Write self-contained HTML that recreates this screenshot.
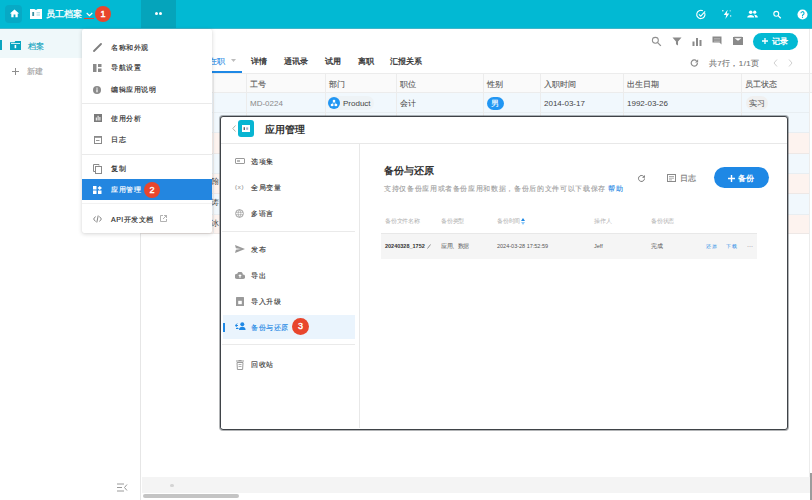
<!DOCTYPE html>
<html><head><meta charset="utf-8">
<style>
*{box-sizing:border-box;margin:0;padding:0}
html,body{width:812px;height:500px;overflow:hidden;background:#fff;font-family:"Liberation Sans",sans-serif;color:#333;-webkit-text-stroke-width:.12px}
.a{position:absolute}
.t{position:absolute;white-space:nowrap;line-height:1}
#top{left:0;top:0;width:812px;height:28px;background:#02b9d3}
#side{left:0;top:28px;width:141px;height:472px;background:#fff;border-right:1px solid #e6e6e6}
.badge{position:absolute;width:17px;height:17px;border-radius:50%;background:#e8462d;color:#fff;font-size:9px;font-weight:normal;text-align:center;line-height:17px;-webkit-text-stroke-width:.4px}
.mi{position:absolute;left:111px;font-size:7px;letter-spacing:.5px;color:#2a2a2a;-webkit-text-stroke-width:.15px;line-height:1;white-space:nowrap}
.th{position:absolute;font-size:8px;color:#5a5a5a;line-height:1;white-space:nowrap}
.td{position:absolute;font-size:8px;color:#444;line-height:1;white-space:nowrap;-webkit-text-stroke-width:0}
.ms{position:absolute;left:251px;font-size:7px;letter-spacing:.6px;color:#333;line-height:1;white-space:nowrap}
</style></head><body>
<!-- top bar -->
<div id="top" class="a">
  <div class="a" style="left:5px;top:5px;width:17px;height:18px;border-radius:4px;background:#07a9c5"></div>
  <svg class="a" style="left:9px;top:8px" width="11" height="11" viewBox="0 0 24 24"><path fill="#fff" d="M10 20v-6h4v6h5v-8h3L12 3 2 12h3v8z"/></svg>
  <svg class="a" style="left:30px;top:9px" width="12" height="10" viewBox="0 0 12 10"><path d="M0 0h4.5l.7.8h1.6L7.5 0H12v10H0z" fill="#fff"/><rect x="2.3" y="3" width="1.8" height="4" fill="#3a8fa0"/><rect x="6.5" y="3.3" width="3.5" height="1" fill="#9fd3de"/><rect x="6.5" y="5.5" width="3.5" height="1" fill="#9fd3de"/></svg>
  <div class="t" style="left:46px;top:10px;font-size:9px;color:#fff;-webkit-text-stroke-width:.3px">员工档案</div>
  <svg class="a" style="left:86px;top:12px" width="7" height="5" viewBox="0 0 7 5"><path d="M0.7 1l2.8 2.6L6.3 1" stroke="#fff" stroke-width="1.2" fill="none"/></svg>
  <div class="a" style="left:84px;top:18px;width:10px;height:1px;background:#e8462d"></div>
  <div class="badge" style="left:95px;top:6px;width:16px;height:16px;line-height:16px;font-weight:normal;-webkit-text-stroke-width:.4px">1</div>
  <div class="a" style="left:141px;top:0;width:35px;height:28px;background:#05a4bb"></div>
  <div class="a" style="left:155px;top:12px;width:3px;height:3px;border-radius:50%;background:#fff"></div>
  <div class="a" style="left:159px;top:12px;width:3px;height:3px;border-radius:50%;background:#fff"></div>
  <!-- right icons -->
  <svg class="a" style="left:695px;top:9px" width="12" height="11" viewBox="0 0 24 24"><path d="M20 8.5A9 9 0 1 1 16 4" stroke="#fff" stroke-width="2.4" fill="none"/><path d="M7.5 11.5l4 4L21 5" stroke="#fff" stroke-width="2.4" fill="none"/></svg>
  <svg class="a" style="left:721px;top:9px" width="11" height="11" viewBox="0 0 24 24"><path fill="#fff" d="M14 2L6 13h5.5l-2 9 8.5-12h-5.5l2-8z"/><circle cx="4" cy="4" r="1.6" fill="#fff"/><circle cx="21" cy="15" r="1.6" fill="#fff"/><circle cx="20" cy="4" r="1.2" fill="#fff"/></svg>
  <svg class="a" style="left:747px;top:10px" width="11" height="8" viewBox="0 0 24 18"><circle cx="8" cy="5" r="4" fill="#fff"/><circle cx="17" cy="5" r="3.6" fill="#fff"/><path d="M0 17c0-4 4-6 8-6s8 2 8 6z" fill="#fff"/><path d="M17 10.5c3.5 0 7 1.7 7 6.5h-6c0-3-1-5-3-6.3z" fill="#fff"/></svg>
  <svg class="a" style="left:772px;top:10px" width="10" height="9" viewBox="0 0 24 24"><circle cx="10" cy="10" r="6.5" stroke="#fff" stroke-width="3" fill="none"/><path d="M15 15l7 7" stroke="#fff" stroke-width="3.4"/></svg>
  <svg class="a" style="left:797px;top:9px" width="11" height="11" viewBox="0 0 24 24"><circle cx="12" cy="12" r="11" fill="#fff"/><path d="M8.6 9.2a3.4 3.4 0 1 1 4.6 3.2c-.9.4-1.2 1-1.2 2v.6" stroke="#00b5d3" stroke-width="2.4" fill="none"/><circle cx="12" cy="18" r="1.4" fill="#00b5d3"/></svg>
</div>

<!-- sidebar -->
<div id="side" class="a">
  <div class="a" style="left:0;top:1px;width:141px;height:29px;background:#eff8fa"></div>
  <div class="a" style="left:0;top:12px;width:2px;height:10px;background:#0aa5c0"></div>
  <svg class="a" style="left:10px;top:13px" width="11" height="9" viewBox="0 0 11 9"><path d="M0 1.2h4.5L5.3 0H11v9H0z" fill="#0aa5c0"/><rect x="1" y="2.5" width="9" height="5.8" fill="#0aa5c0"/><rect x="1" y="2" width="9" height="0.8" fill="#fff"/><rect x="4.6" y="4" width="1.6" height="3.2" fill="#fff"/></svg>
  <div class="t" style="left:28px;top:15px;font-size:8px;color:#0aa0bb">档案</div>
  <div class="t" style="left:27px;top:40px;font-size:8px;color:#9e9e9e">新建</div>
  <svg class="a" style="left:12px;top:40px" width="7" height="7" viewBox="0 0 7 7"><path d="M3.5 0v7M0 3.5h7" stroke="#8e8e8e" stroke-width="1"/></svg>
</div>

<!-- main -->
<div class="a" style="left:141px;top:28px;width:671px;height:472px;background:#fff"></div>
<div class="a" style="left:0;top:28px;width:812px;height:1px;background:#3fb6ca"></div>
<!-- toolbar -->
<svg class="a" style="left:651px;top:36px" width="11" height="11" viewBox="0 0 24 24"><circle cx="9.5" cy="9.5" r="6.5" stroke="#8f8f8f" stroke-width="2.2" fill="none"/><path d="M14.5 14.5l7 7" stroke="#8f8f8f" stroke-width="2.8"/></svg>
<svg class="a" style="left:672px;top:37px" width="10" height="9" viewBox="0 0 24 22"><path d="M1 1h22l-8.5 10v10l-5-3v-7z" fill="#8a8a8a"/></svg>
<svg class="a" style="left:692px;top:37px" width="10" height="9" viewBox="0 0 20 18"><rect x="1" y="9" width="4" height="9" fill="#8a8a8a"/><rect x="8" y="2" width="4" height="16" fill="#8a8a8a"/><rect x="15" y="6" width="4" height="12" fill="#8a8a8a"/></svg>
<svg class="a" style="left:712px;top:36px" width="10" height="9" viewBox="0 0 20 18"><path d="M1 1h18v16l-4-4H1z" fill="#8a8a8a"/><path d="M4 5h12M4 8h12M4 11h12" stroke="#c8c8c8" stroke-width="1"/></svg>
<svg class="a" style="left:733px;top:36px" width="10" height="9" viewBox="0 0 20 18"><path d="M0 2h20v16H0z" fill="#8a8a8a"/><path d="M3 4.5h14l-7 5z" fill="#fff"/><path d="M2 0h16" stroke="#bbb" stroke-width="1.5"/></svg>
<div class="a" style="left:753px;top:33px;width:45px;height:17px;border-radius:9px;background:#02b9d3"></div>
<svg class="a" style="left:762px;top:38px" width="6" height="6" viewBox="0 0 6 6"><path d="M3 0v6M0 3h6" stroke="#fff" stroke-width="1.3"/></svg>
<div class="t" style="left:772px;top:38px;font-size:8px;color:#fff;-webkit-text-stroke-width:.35px">记录</div>
<!-- pager -->
<svg class="a" style="left:690px;top:59px" width="9" height="8" viewBox="0 0 24 22"><path d="M20 11a8.5 8.5 0 1 1-2.5-6" stroke="#8a8a8a" stroke-width="3.2" fill="none"/><path d="M22 1v8.5h-8.5z" fill="#8a8a8a"/></svg>
<div class="t" style="left:709px;top:60px;font-size:8px;color:#757575;letter-spacing:.35px">共7行，1/1页</div>
<svg class="a" style="left:773px;top:59px" width="5" height="8" viewBox="0 0 5 8"><path d="M4 0.5L1 4l3 3.5" stroke="#d0d0d0" stroke-width="1" fill="none"/></svg>
<svg class="a" style="left:788px;top:59px" width="5" height="8" viewBox="0 0 5 8"><path d="M1 0.5L4 4 1 7.5" stroke="#d0d0d0" stroke-width="1" fill="none"/></svg>
<!-- tabs -->
<div class="t" style="left:209px;top:58px;font-size:8px;color:#1e88e5">在职</div>
<svg class="a" style="left:231px;top:59px" width="5" height="4" viewBox="0 0 5 4"><path d="M0 0h5L2.5 3z" fill="#bdbdbd"/></svg>
<div class="a" style="left:141px;top:71px;width:101px;height:2px;background:#1e88e5"></div>
<div class="t" style="left:251px;top:58px;font-size:8px;color:#333;-webkit-text-stroke-width:.3px">详情</div>
<div class="t" style="left:284px;top:58px;font-size:8px;color:#333;-webkit-text-stroke-width:.3px">通讯录</div>
<div class="t" style="left:325px;top:58px;font-size:8px;color:#333;-webkit-text-stroke-width:.3px">试用</div>
<div class="t" style="left:358px;top:58px;font-size:8px;color:#333;-webkit-text-stroke-width:.3px">离职</div>
<div class="t" style="left:390px;top:58px;font-size:8px;color:#333;-webkit-text-stroke-width:.3px">汇报关系</div>
<!-- table -->
<div class="a" style="left:141px;top:73px;width:671px;height:20px;background:#fafafa;border-top:1px solid #ececec;border-bottom:1px solid #ececec"></div>
<div class="a" style="left:141px;top:93px;width:668px;height:20px;background:#f1f8fd;border-bottom:1px solid #e8eef2"></div>
<div class="a" style="left:141px;top:113px;width:668px;height:20px;background:#f1f8fd;border-bottom:1px solid #e8eef2"></div>
<div class="a" style="left:141px;top:133px;width:668px;height:21px;background:#fdf3ef;border-bottom:1px solid #eee8e6"></div>
<div class="a" style="left:141px;top:154px;width:668px;height:20px;background:#f1f8fd;border-bottom:1px solid #e8eef2"></div>
<div class="a" style="left:141px;top:174px;width:668px;height:20px;background:#fdf3ef;border-bottom:1px solid #eee8e6"></div>
<div class="a" style="left:141px;top:194px;width:668px;height:21px;background:#f1f8fd;border-bottom:1px solid #e8eef2"></div>
<div class="a" style="left:141px;top:215px;width:668px;height:19px;background:#fdf3ef;border-bottom:1px solid #eee8e6"></div>
<div class="a" style="left:246px;top:73px;width:1px;height:161px;background:#ececec"></div>
<div class="a" style="left:325px;top:73px;width:1px;height:161px;background:#ececec"></div>
<div class="a" style="left:396px;top:73px;width:1px;height:161px;background:#ececec"></div>
<div class="a" style="left:483px;top:73px;width:1px;height:161px;background:#ececec"></div>
<div class="a" style="left:540px;top:73px;width:1px;height:161px;background:#ececec"></div>
<div class="a" style="left:623px;top:73px;width:1px;height:161px;background:#ececec"></div>
<div class="a" style="left:741px;top:73px;width:1px;height:161px;background:#ececec"></div>
<div class="a" style="left:809px;top:73px;width:1px;height:161px;background:#ececec"></div>
<div class="a" style="left:213px;top:73px;width:1px;height:161px;background:#ececec"></div>
<div class="th" style="left:250px;top:81px">工号</div>
<div class="th" style="left:329px;top:81px">部门</div>
<div class="th" style="left:400px;top:81px">职位</div>
<div class="th" style="left:487px;top:81px">性别</div>
<div class="th" style="left:544px;top:81px">入职时间</div>
<div class="th" style="left:627px;top:81px">出生日期</div>
<div class="th" style="left:745px;top:81px">员工状态</div>
<div class="td" style="left:250px;top:100px;color:#8a8a8a">MD-0224</div>
<div class="a" style="left:327px;top:96px;width:47px;height:14px;border-radius:7px;background:#eef3f6"></div>
<div class="a" style="left:328px;top:97px;width:12px;height:12px;border-radius:50%;background:#2196f3"></div>
<svg class="a" style="left:330px;top:99px" width="8" height="8" viewBox="0 0 8 8"><circle cx="4" cy="2" r="1.3" fill="#fff"/><circle cx="2" cy="6" r="1.3" fill="#fff"/><circle cx="6" cy="6" r="1.3" fill="#fff"/><path d="M4 2L2 6h4z" stroke="#fff" stroke-width=".6" fill="none"/></svg>
<div class="td" style="left:343px;top:100px">Product</div>
<div class="td" style="left:400px;top:100px">会计</div>
<div class="a" style="left:487px;top:97px;width:17px;height:13px;border-radius:7px;background:#2196f3"></div>
<div class="t" style="left:491px;top:100px;font-size:8px;color:#fff">男</div>
<div class="td" style="left:544px;top:100px">2014-03-17</div>
<div class="td" style="left:627px;top:100px">1992-03-26</div>
<div class="a" style="left:746px;top:96px;width:22px;height:14px;border-radius:7px;background:#f0f0f0"></div>
<div class="td" style="left:749px;top:100px;color:#666;-webkit-text-stroke-width:.1px">实习</div>
<div class="td" style="left:211px;top:178px">翰</div>
<div class="td" style="left:211px;top:199px">涛</div>
<div class="td" style="left:211px;top:220px">冰</div>
<!-- bottom bar -->
<div class="a" style="left:809px;top:29px;width:1px;height:448px;background:#ececec"></div>
<div class="a" style="left:810px;top:473px;width:2px;height:27px;background:#9c9c9c"></div>
<div class="a" style="left:142px;top:477px;width:668px;height:16px;background:#f4f4f4"></div>
<div class="a" style="left:143px;top:494px;width:96px;height:4px;border-radius:2px;background:#c4c4c4"></div>
<div class="a" style="left:170px;top:484px;width:4px;height:3px;border-radius:2px;background:#d4d4d4"></div>
<svg class="a" style="left:117px;top:483px" width="11" height="9" viewBox="0 0 11 9"><path d="M0 1h7M0 4.5h5M0 8h7M10 1.5L7.5 4.5 10 7.5" stroke="#9a9a9a" stroke-width="1" fill="none"/></svg>

<!-- dropdown menu -->
<div class="a" style="left:82px;top:29px;width:130px;height:204px;background:#fff;border-radius:2px;box-shadow:0 1px 4px rgba(0,0,0,.16),0 0 1px rgba(0,0,0,.1)"></div>
<svg class="a" style="left:93px;top:43px" width="9" height="9" viewBox="0 0 9 9"><path d="M1 8L8 1" stroke="#7f7f7f" stroke-width="1.8" stroke-linecap="round"/></svg>
<div class="mi" style="top:44px">名称和外观</div>
<svg class="a" style="left:93px;top:64px" width="9" height="8" viewBox="0 0 9 8"><rect x="0" y="0" width="3.5" height="8" fill="#8a8a8a"/><rect x="5" y="0" width="3.5" height="3" fill="#8a8a8a"/><rect x="5" y="4.5" width="3.5" height="3.5" fill="#8a8a8a"/></svg>
<div class="mi" style="top:64px">导航设置</div>
<svg class="a" style="left:93px;top:86px" width="8" height="8" viewBox="0 0 8 8"><circle cx="4" cy="4" r="4" fill="#8a8a8a"/><rect x="3.4" y="3.3" width="1.2" height="3" fill="#fff"/><rect x="3.4" y="1.6" width="1.2" height="1.1" fill="#fff"/></svg>
<div class="mi" style="top:86px">编辑应用说明</div>
<div class="a" style="left:82px;top:103px;width:130px;height:1px;background:#eaeaea"></div>
<svg class="a" style="left:94px;top:114px" width="8" height="8" viewBox="0 0 8 8"><rect x="0" y="0" width="8" height="8" fill="#7a7a7a"/><rect x="1.8" y="3.5" width="1" height="3" fill="#fff"/><rect x="3.6" y="1.8" width="1" height="4.7" fill="#fff"/><rect x="5.4" y="3" width="1" height="3.5" fill="#fff"/></svg>
<div class="mi" style="top:115px">使用分析</div>
<svg class="a" style="left:94px;top:136px" width="8" height="8" viewBox="0 0 8 8"><rect x="0.5" y="0.5" width="7" height="7" stroke="#8a8a8a" stroke-width="1" fill="none"/><rect x="0.5" y="0.5" width="7" height="1.3" fill="#8a8a8a"/><rect x="2" y="4" width="3.5" height=".9" fill="#8a8a8a"/></svg>
<div class="mi" style="top:136px">日志</div>
<div class="a" style="left:82px;top:154px;width:130px;height:1px;background:#eaeaea"></div>
<svg class="a" style="left:93px;top:164px" width="9" height="10" viewBox="0 0 9 10"><path d="M6 1.5V0.5H0.5v7h1.5" stroke="#8a8a8a" stroke-width="1" fill="none"/><rect x="2.5" y="2.5" width="6" height="7" stroke="#8a8a8a" stroke-width="1" fill="none"/></svg>
<div class="mi" style="top:165px">复制</div>
<div class="a" style="left:82px;top:179px;width:130px;height:21px;background:#2386e0"></div>
<svg class="a" style="left:93px;top:186px" width="9" height="8" viewBox="0 0 9 8"><rect x="0" y="0" width="3.5" height="3.5" fill="#fff"/><path d="M6.7 0L9 2 6.7 4 4.5 2z" fill="#fff"/><rect x="0" y="4.5" width="3.5" height="3.5" fill="#fff"/><rect x="5" y="4.5" width="3.5" height="3.5" fill="#fff"/></svg>
<div class="mi" style="top:186px;color:#fff">应用管理</div>
<div class="badge" style="left:144px;top:182px;width:16px;height:16px;line-height:16px">2</div>
<div class="a" style="left:82px;top:203px;width:130px;height:1px;background:#f2f2f2"></div>
<svg class="a" style="left:93px;top:215px" width="9" height="8" viewBox="0 0 9 8"><path d="M2.5 1.5L0.6 4l1.9 2.5M6.5 1.5L8.4 4 6.5 6.5M5.2 0.5L3.8 7.5" stroke="#858585" stroke-width="1" fill="none"/></svg>
<div class="mi" style="top:216px">API开发文档</div>
<svg class="a" style="left:160px;top:215px" width="7" height="7" viewBox="0 0 7 7"><path d="M3 0.5H0.5v6h6V4M4 0.5h2.5V3M6.5 0.5L3 4" stroke="#9e9e9e" stroke-width=".8" fill="none"/></svg>

<!-- modal -->
<div class="a" style="left:220px;top:116px;width:568px;height:314px;background:#fff;border:1px solid #3f4348;box-shadow:0 0 0 1px rgba(63,67,72,.4);border-radius:3px"></div>
<svg class="a" style="left:232px;top:125px" width="4" height="7" viewBox="0 0 4 7"><path d="M3.5 0.5L0.8 3.5l2.7 3" stroke="#a8b4a8" stroke-width="1" fill="none"/></svg>
<div class="a" style="left:238px;top:120px;width:16px;height:17px;border-radius:3px;background:#08b5d2"></div>
<svg class="a" style="left:242px;top:125px" width="8" height="7" viewBox="0 0 8 7"><rect x="0" y="0" width="8" height="7" fill="#fff"/><rect x="1.6" y="2.2" width="1.3" height="2.8" fill="#555"/><rect x="4.2" y="2.4" width="2" height="2.4" fill="#aac"/></svg>
<div class="t" style="left:265px;top:125px;font-size:10px;font-weight:bold;color:#333;-webkit-text-stroke-width:0">应用管理</div>
<div class="a" style="left:221px;top:143px;width:566px;height:1px;background:#e8e8e8"></div>
<div class="a" style="left:359px;top:144px;width:1px;height:284px;background:#e8e8e8"></div>
<div class="a" style="left:221px;top:144px;width:138px;height:284px;background:#fff"></div>
<svg class="a" style="left:235px;top:158px" width="10" height="6" viewBox="0 0 10 6"><rect x="0.5" y="0.5" width="9" height="5" rx=".5" stroke="#9a9a9a" stroke-width="1" fill="none"/><rect x="2" y="2.3" width="3" height="1.4" fill="#9a9a9a"/></svg>
<div class="ms" style="top:158px">选项集</div>
<div class="t" style="left:235px;top:184px;font-size:6px;color:#9a9a9a;letter-spacing:.8px">(x)</div>
<div class="ms" style="top:184px">全局变量</div>
<svg class="a" style="left:235px;top:209px" width="9" height="9" viewBox="0 0 10 10"><circle cx="5" cy="5" r="4.3" stroke="#9a9a9a" stroke-width="1" fill="none"/><path d="M1 3.6h8M1 6.4h8M5 0.8c-2 2.3-2 6.1 0 8.4M5 0.8c2 2.3 2 6.1 0 8.4" stroke="#9a9a9a" stroke-width=".7" fill="none"/></svg>
<div class="ms" style="top:210px">多语言</div>
<div class="a" style="left:222px;top:231px;width:133px;height:1px;background:#eaeaea"></div>
<svg class="a" style="left:235px;top:245px" width="10" height="8" viewBox="0 0 10 8"><path d="M0 0l10 4-10 4 .9-3.3L6 4 .9 3.3z" fill="#9a9a9a"/></svg>
<div class="ms" style="top:246px">发布</div>
<svg class="a" style="left:235px;top:272px" width="10" height="7" viewBox="0 0 24 17"><path d="M19 6A7 7 0 0 0 5.3 4.2 5.5 5.5 0 0 0 5.5 17H19a5 5 0 0 0 0-11z" fill="#9a9a9a"/><path d="M12 5.5l-4.5 4.5h3v4h3v-4h3z" fill="#fff"/></svg>
<div class="ms" style="top:272px">导出</div>
<svg class="a" style="left:236px;top:297px" width="8" height="9" viewBox="0 0 8 9"><rect x="0" y="0" width="8" height="9" rx=".5" fill="#9a9a9a"/><rect x="2.2" y="3.8" width="3.6" height="3.4" fill="#fff"/></svg>
<div class="ms" style="top:298px">导入升级</div>
<div class="a" style="left:223px;top:315px;width:132px;height:24px;background:#eaf4fd"></div>
<div class="a" style="left:223px;top:323px;width:2px;height:9px;background:#1e88e5"></div>
<svg class="a" style="left:235px;top:322px" width="11" height="8" viewBox="0 0 11 8"><circle cx="7.3" cy="2.2" r="2" fill="#1e88e5"/><path d="M4 8c0-2.3 1.5-3.3 3.3-3.3S10.6 5.7 10.6 8z" fill="#1e88e5"/><path d="M2.2 1.5L0.3 3.5 2.2 5.5M0.5 3.5h2.5" stroke="#1e88e5" stroke-width="1" fill="none"/><path d="M1 6.5h2.5" stroke="#1e88e5" stroke-width="1"/></svg>
<div class="ms" style="top:324px;color:#1e88e5">备份与还原</div>
<div class="badge" style="left:292px;top:318px">3</div>
<div class="a" style="left:222px;top:344px;width:133px;height:1px;background:#eaeaea"></div>
<svg class="a" style="left:236px;top:360px" width="8" height="10" viewBox="0 0 8 10"><path d="M0 1h8M2.5 0.5h3" stroke="#9a9a9a" stroke-width="1"/><path d="M1 2.5h6l-.4 7h-5.2z" stroke="#9a9a9a" stroke-width="1" fill="none"/><path d="M2.5 4.5h3M2.5 6.5h3" stroke="#9a9a9a" stroke-width=".8"/></svg>
<div class="ms" style="top:361px">回收站</div>
<!-- content -->
<div class="t" style="left:384px;top:166px;font-size:10px;font-weight:bold;color:#333;-webkit-text-stroke-width:0">备份与还原</div>
<div class="t" style="left:384px;top:185px;font-size:7px;color:#9e9e9e;letter-spacing:.65px">支持仅备份应用或者备份应用和数据，备份后的文件可以下载保存 <span style="color:#1e88e5">帮助</span></div>
<svg class="a" style="left:637px;top:174px" width="9" height="9" viewBox="0 0 24 24"><path d="M20 12a8 8 0 1 1-2.3-5.7" stroke="#757575" stroke-width="2.6" fill="none"/><path d="M21 2.5v7.5h-7.5z" fill="#757575"/></svg>
<svg class="a" style="left:667px;top:174px" width="9" height="8" viewBox="0 0 9 8"><rect x="0.5" y="0.5" width="8" height="7" stroke="#8a8a8a" stroke-width="1" fill="none"/><path d="M2 2.5h5M2 4.2h5M2 5.9h3" stroke="#8a8a8a" stroke-width=".7"/></svg>
<div class="t" style="left:680px;top:175px;font-size:8px;color:#757575">日志</div>
<div class="a" style="left:714px;top:167px;width:55px;height:21px;border-radius:11px;background:#1e88e5"></div>
<svg class="a" style="left:728px;top:175px" width="7" height="7" viewBox="0 0 7 7"><path d="M3.5 0v7M0 3.5h7" stroke="#fff" stroke-width="1.4"/></svg>
<div class="t" style="left:738px;top:175px;font-size:8px;color:#fff;font-weight:bold;-webkit-text-stroke-width:0">备份</div>
<div class="t" style="left:385px;top:219px;font-size:5.5px;color:#b0b0b0;letter-spacing:-.2px;-webkit-text-stroke-width:0">备份文件名称</div>
<div class="t" style="left:441px;top:219px;font-size:5.5px;color:#b0b0b0;letter-spacing:-.2px;-webkit-text-stroke-width:0">备份类型</div>
<div class="t" style="left:497px;top:219px;font-size:5.5px;color:#b0b0b0;letter-spacing:-.2px;-webkit-text-stroke-width:0">备份时间</div>
<svg class="a" style="left:521px;top:218px" width="4" height="7" viewBox="0 0 4 7"><path d="M0 3h4L2 0z" fill="#1e88e5"/><path d="M0 4h4L2 7z" fill="#90caf9"/></svg>
<div class="t" style="left:594px;top:219px;font-size:5.5px;color:#b0b0b0;letter-spacing:-.2px;-webkit-text-stroke-width:0">操作人</div>
<div class="t" style="left:651px;top:219px;font-size:5.5px;color:#b0b0b0;letter-spacing:-.2px;-webkit-text-stroke-width:0">备份状态</div>
<div class="a" style="left:381px;top:233px;width:376px;height:26px;background:#f5f5f5;border-top:1px solid #e8e8e8"></div>
<div class="t" style="left:385px;top:244px;font-size:5.5px;color:#333;font-weight:bold;-webkit-text-stroke-width:0">20240328_1752</div>
<svg class="a" style="left:427px;top:244px" width="4" height="5" viewBox="0 0 4 5"><path d="M0.5 4.5L3.5 0.5" stroke="#757575" stroke-width=".8"/></svg>
<div class="t" style="left:441px;top:243px;font-size:6px;color:#555;letter-spacing:-.5px;-webkit-text-stroke-width:0">应用、数据</div>
<div class="t" style="left:497px;top:244px;font-size:5.5px;color:#555;-webkit-text-stroke-width:0">2024-03-28 17:52:59</div>
<div class="t" style="left:594px;top:244px;font-size:5.5px;color:#555;-webkit-text-stroke-width:0">Jeff</div>
<div class="t" style="left:651px;top:243px;font-size:6px;color:#555;letter-spacing:-.5px;-webkit-text-stroke-width:0">完成</div>
<div class="t" style="left:706px;top:244px;font-size:5px;color:#1e88e5;letter-spacing:.5px;-webkit-text-stroke-width:0">还原</div>
<div class="t" style="left:726px;top:244px;font-size:5px;color:#1e88e5;letter-spacing:.5px;-webkit-text-stroke-width:0">下载</div>
<div class="t" style="left:747px;top:243px;font-size:6px;color:#757575">···</div>
</body></html>
